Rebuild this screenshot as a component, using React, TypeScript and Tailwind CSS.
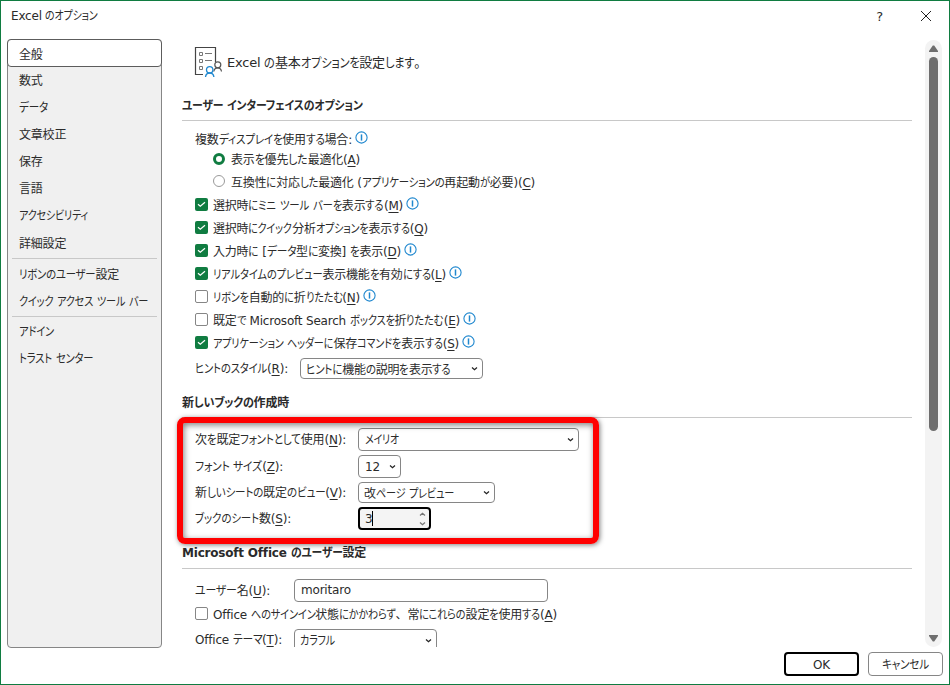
import { useLayoutEffect, useRef, type ReactNode } from "react";
import { clsx } from "clsx";

const KANA = /([\u3040-\u30ff]+)/;

/* A label whose kana are condensed until the whole label is `w` wide.
   "&X" marks the access key X. */
function T({ children, w, className }: { children: string; w?: number; className?: string }) {
  const ref = useRef<HTMLSpanElement>(null);
  useLayoutEffect(() => {
    const el = ref.current;
    if (!el || !w) return;
    const kana = Array.from(el.querySelectorAll<HTMLElement>("[data-kana]"));
    kana.forEach((k) => {
      k.style.transform = "";
      k.style.marginRight = "";
    });
    const total = el.getBoundingClientRect().width;
    const widths = kana.map((k) => k.getBoundingClientRect().width);
    const sum = widths.reduce((a, b) => a + b, 0);
    if (!sum) return;
    const s = (w - (total - sum)) / sum;
    kana.forEach((k, i) => {
      k.style.transform = `scaleX(${s})`;
      k.style.marginRight = `${widths[i] * (s - 1)}px`;
    });
  }, [w, children]);
  return (
    <span ref={ref} className={clsx("inline-block shrink-0 whitespace-pre", className)}>
      {children.split(KANA).map((part, i) => {
        if (KANA.test(part))
          return (
            <span key={i} data-kana className="inline-block origin-left [font-feature-settings:'palt']">
              {part}
            </span>
          );
        const m = part.match(/^(.*)&(.)(.*)$/);
        return m ? (
          <span key={i}>
            {m[1]}
            <span className="underline underline-offset-2">{m[2]}</span>
            {m[3]}
          </span>
        ) : (
          <span key={i}>{part}</span>
        );
      })}
    </span>
  );
}

function Info() {
  return (
    <svg viewBox="0 0 13 13" className="-mt-[3px] ml-[3px] h-[13px] w-[13px] shrink-0" fill="none" stroke="#2088cf">
      <circle cx="6.5" cy="6.5" r="5.6" strokeWidth="1.1" />
      <path d="M6.5 3.4v6.2" strokeWidth="1.5" />
    </svg>
  );
}

function Chevron({ className }: { className?: string }) {
  return (
    <svg viewBox="0 0 7 4" className={clsx("h-1 w-[7px] shrink-0", className)} fill="none" stroke="#222" strokeWidth="1.2">
      <path d="M1 .5 3.5 2.8 6 .5" />
    </svg>
  );
}

function Check({ on, w, info, children }: { on?: boolean; w: number; info?: boolean; children: string }) {
  return (
    <div className="flex h-[23px] shrink-0 items-center pl-[13px]">
      <span
        className={clsx(
          "mr-[5px] flex h-[13px] w-[13px] shrink-0 items-center justify-center rounded-[2px]",
          on ? "bg-[#107c41]" : "border border-[#868686] bg-white",
        )}
      >
        {on && (
          <svg viewBox="0 0 9 7" className="h-[7px] w-[9px]" fill="none" stroke="#fff" strokeWidth="1.2">
            <path d="M1 3.2 3.3 5.3 8 1.2" />
          </svg>
        )}
      </span>
      <T w={w} className="mt-[3px]">
        {children}
      </T>
      {info && <Info />}
    </div>
  );
}

function Radio({ on, w, textClass, children }: { on?: boolean; w: number; textClass?: string; children: string }) {
  return (
    <div className="flex h-[22px] shrink-0 items-center pl-[31px]">
      <span
        className={clsx(
          "-mt-[3px] mr-[6px] h-3 w-3 shrink-0 rounded-full bg-white",
          on ? "border-[3.5px] border-[#107c41]" : "border border-[#9a9a9a]",
        )}
      />
      <T w={w} className={textClass}>
        {children}
      </T>
    </div>
  );
}

function Combo({ className, children }: { className: string; children: ReactNode }) {
  return (
    <div
      className={clsx(
        "flex shrink-0 items-center justify-between rounded-[4px] border border-[#868686] bg-white pr-[4px]",
        className,
      )}
    >
      {children}
      <Chevron />
    </div>
  );
}

function Field({ label, w, labelClass, className, children }: { label: string; w: number; labelClass: string; className: string; children: ReactNode }) {
  return (
    <div className={clsx("flex shrink-0 items-center pl-[13px]", className)}>
      <div className={clsx("flex shrink-0", labelClass)}>
        <T w={w}>{label}</T>
      </div>
      {children}
    </div>
  );
}

function Title({ w, className, children }: { w: number; className: string; children: string }) {
  return (
    <div className={clsx("flex w-[730px] shrink-0 items-center border-b border-[#c8c8c8] font-bold", className)}>
      <T w={w}>{children}</T>
    </div>
  );
}

function Item({ w, className, children }: { w: number; className?: string; children: string }) {
  return (
    <div className={clsx("flex shrink-0 items-center pt-px pl-[11px]", className ?? "h-[27px]")}>
      <T w={w}>{children}</T>
    </div>
  );
}

function Separator() {
  return <div className="mx-1 mt-px mb-px h-px shrink-0 bg-[#c8c8c8]" />;
}

function OptionsIcon() {
  return (
    <svg viewBox="0 0 28 32" className="h-8 w-7 shrink-0" fill="none">
      <path d="M9 28.5H1.5V1.5h20V16" stroke="#444" strokeWidth="1.2" />
      <g stroke="#777">
        <path d="M5.5 6.5h3v3h-3zM5.5 13.5h3v3h-3zM5.5 20.5h3v3h-3zM11 7.5h7M11 14.5h7" />
      </g>
      <g stroke="#555" strokeWidth="1.2">
        <circle cx="23.8" cy="18.8" r="3" />
        <path d="M19.8 25.5c.4-2.4 1.8-3.7 4-3.7s3.3 1.3 3.7 3.7" />
      </g>
      <g stroke="#2088cf" strokeWidth="1.3">
        <circle cx="15.7" cy="23.8" r="3.2" />
        <path d="M11.5 31c.3-2.6 1.9-4 4.2-4s3.9 1.4 4.2 4" />
      </g>
    </svg>
  );
}

export default function App() {
  return (
    <div className="relative flex h-[685px] w-[950px] flex-col overflow-hidden border border-[#107c41] bg-white font-['DejaVu_Sans','Noto_Sans_CJK_JP',sans-serif] text-[12px] leading-[18px] tracking-[-0.2px] text-[#2b2b2b]">
      <header className="flex h-[38px] shrink-0 items-start pt-[6px] pl-[10px]">
        <T w={87}>Excel のオプション</T>
        <span className="mt-px mr-[37px] ml-auto text-[13px]">?</span>
        <svg viewBox="0 0 12 12" className="mt-[3px] mr-[17px] h-3 w-3" fill="none" stroke="#222" strokeWidth="1">
          <path d="M1 1l10 10M11 1 1 11" />
        </svg>
      </header>

      <main className="flex h-[609px] shrink-0 pl-[6px]">
        <nav className="flex w-[155px] shrink-0 flex-col rounded-[4px] border border-[#868686] bg-[#f0f0f0]">
          <div className="-mx-px -mt-px flex h-7 shrink-0 items-center rounded-[4px] border-[1.5px] border-[#5c5c5c] bg-white pt-[3px] pl-[11px]">
            <T w={24}>全般</T>
          </div>
          <Item w={24}>数式</Item>
          <Item w={29}>データ</Item>
          <Item w={48}>文章校正</Item>
          <Item w={24}>保存</Item>
          <Item w={24}>言語</Item>
          <Item w={69}>アクセシビリティ</Item>
          <Item w={48} className="h-7">詳細設定</Item>
          <Separator />
          <Item w={100} className="h-7">リボンのユーザー設定</Item>
          <Item w={129}>クイック アクセス ツール バー</Item>
          <Separator />
          <Item w={35}>アドイン</Item>
          <Item w={74}>トラスト センター</Item>
        </nav>

        <section className="mt-px ml-5 flex h-[607px] w-[743px] shrink-0 flex-col overflow-hidden">
          <div className="flex h-11 shrink-0 items-center pl-3 text-[13px]">
            <OptionsIcon />
            <T w={200} className="mt-[2px] ml-[5px]">Excel の基本オプションを設定します。</T>
          </div>
          <Title w={181} className="h-[37px] pt-[7px]">ユーザー インターフェイスのオプション</Title>
          <div className="mt-2 flex h-5 shrink-0 items-center pl-[13px]">
            <T w={157} className="mt-[2px]">複数ディスプレイを使用する場合:</T>
            <Info />
          </div>
          <Radio on w={129}>表示を優先した最適化(&A)</Radio>
          <Radio w={304} textClass="mt-[2px]">互換性に対応した最適化 (アプリケーションの再起動が必要)(&C)</Radio>
          <Check on w={190} info>選択時にミニ ツール バーを表示する(&M)</Check>
          <Check on w={215}>選択時にクイック分析オプションを表示する(&Q)</Check>
          <Check on w={188} info>入力時に [データ型に変換] を表示(&D)</Check>
          <Check on w={233} info>リアルタイムのプレビュー表示機能を有効にする(&L)</Check>
          <Check w={147} info>リボンを自動的に折りたたむ(&N)</Check>
          <Check w={247} info>既定で Microsoft Search ボックスを折りたたむ(&E)</Check>
          <Check on w={246} info>アプリケーション ヘッダーに保存コマンドを表示する(&S)</Check>
          <Field label="ヒントのスタイル(&R):" w={93} labelClass="w-[105px] pt-px" className="h-[29px]">
            <Combo className="h-[21px] w-[183px] pl-[5px]">
              <T w={145} className="mt-[2px]">ヒントに機能の説明を表示する</T>
            </Combo>
          </Field>
          <Title w={107} className="h-[35px] pt-[5px]">新しいブックの作成時</Title>
          <Field label="次を既定フォントとして使用(&N):" w={151} labelClass="w-[163px]" className="mt-[10px] h-[23px]">
            <Combo className="h-[23px] w-[221px] pl-[6px]">
              <T w={34}>メイリオ</T>
            </Combo>
          </Field>
          <Field label="フォント サイズ(&Z):" w={88} labelClass="w-[163px]" className="mt-1 h-[23px]">
            <Combo className="h-[23px] w-[43px] pl-[6px]">
              <T>12</T>
            </Combo>
          </Field>
          <Field label="新しいシートの既定のビュー(&V):" w={151} labelClass="w-[163px]" className="mt-1 h-[21px]">
            <Combo className="h-[21px] w-[137px] pl-[5px]">
              <T w={90} className="mt-[2px]">改ページ プレビュー</T>
            </Combo>
          </Field>
          <Field label="ブックのシート数(&S):" w={96} labelClass="w-[163px]" className="mt-1 h-[23px]">
            <div className="flex h-[23px] w-[73px] shrink-0 items-center rounded-[4px] border-2 border-black bg-[#f4f4f4] pr-[3px] pl-[5px]">
              <T>3</T>
              <span className="h-[15px] w-px bg-black" />
              <div className="ml-auto flex flex-col gap-[6px] opacity-60">
                <Chevron className="rotate-180" />
                <Chevron />
              </div>
            </div>
          </Field>
          <Title w={184} className="h-[39px] pt-2">Microsoft Office のユーザー設定</Title>
          <Field label="ユーザー名(&U):" w={75} labelClass="w-[99px]" className="mt-[10px] h-[23px]">
            <div className="flex h-[23px] w-[254px] items-center rounded-[4px] border border-[#868686] pb-[2px] pl-[6px]">
              <T>moritaro</T>
            </div>
          </Field>
          <Check w={344}>Office へのサインイン状態にかかわらず、常にこれらの設定を使用する(&A)</Check>
          <Field label="Office テーマ(&T):" w={87} labelClass="w-[99px] -mt-px" className="mt-1 h-[23px]">
            <Combo className="h-[23px] w-[143px] pl-[5px]">
              <T w={35}>カラフル</T>
            </Combo>
          </Field>
        </section>

        <div className="mt-px flex h-[607px] w-[17px] shrink-0 flex-col items-center rounded-full bg-[#f3f3f3] py-[5px]">
          <svg viewBox="0 0 9 7" className="h-[7px] w-[9px] shrink-0" fill="#6e6e6e">
            <path d="M3.8.5h1.4L9 6v1H0V6z" />
          </svg>
          <div className="mt-[5px] h-[374px] w-[9px] shrink-0 rounded-full bg-[#6e6e6e]" />
          <svg viewBox="0 0 9 7" className="mt-auto h-[7px] w-[9px] shrink-0" fill="#6e6e6e">
            <path d="M3.8 6.5h1.4L9 1V0H0v1z" />
          </svg>
        </div>
      </main>

      <footer className="mt-1 mr-[6px] flex h-6 shrink-0 justify-end gap-[9px]">
        <button className="flex w-[75px] items-center justify-center rounded-[4px] border-2 border-black pt-px">OK</button>
        <button className="flex w-[75px] items-center justify-center rounded-[4px] border border-[#868686] pt-px">
          <T w={47}>キャンセル</T>
        </button>
      </footer>

      <div className="pointer-events-none absolute top-[416px] left-[176px] h-[127px] w-[422px] rounded-[8px] border-[6px] border-[#ff0000] shadow-[1px_1px_5px_rgba(0,0,0,0.5),inset_1px_2px_6px_rgba(0,0,0,0.5)]" />
    </div>
  );
}
